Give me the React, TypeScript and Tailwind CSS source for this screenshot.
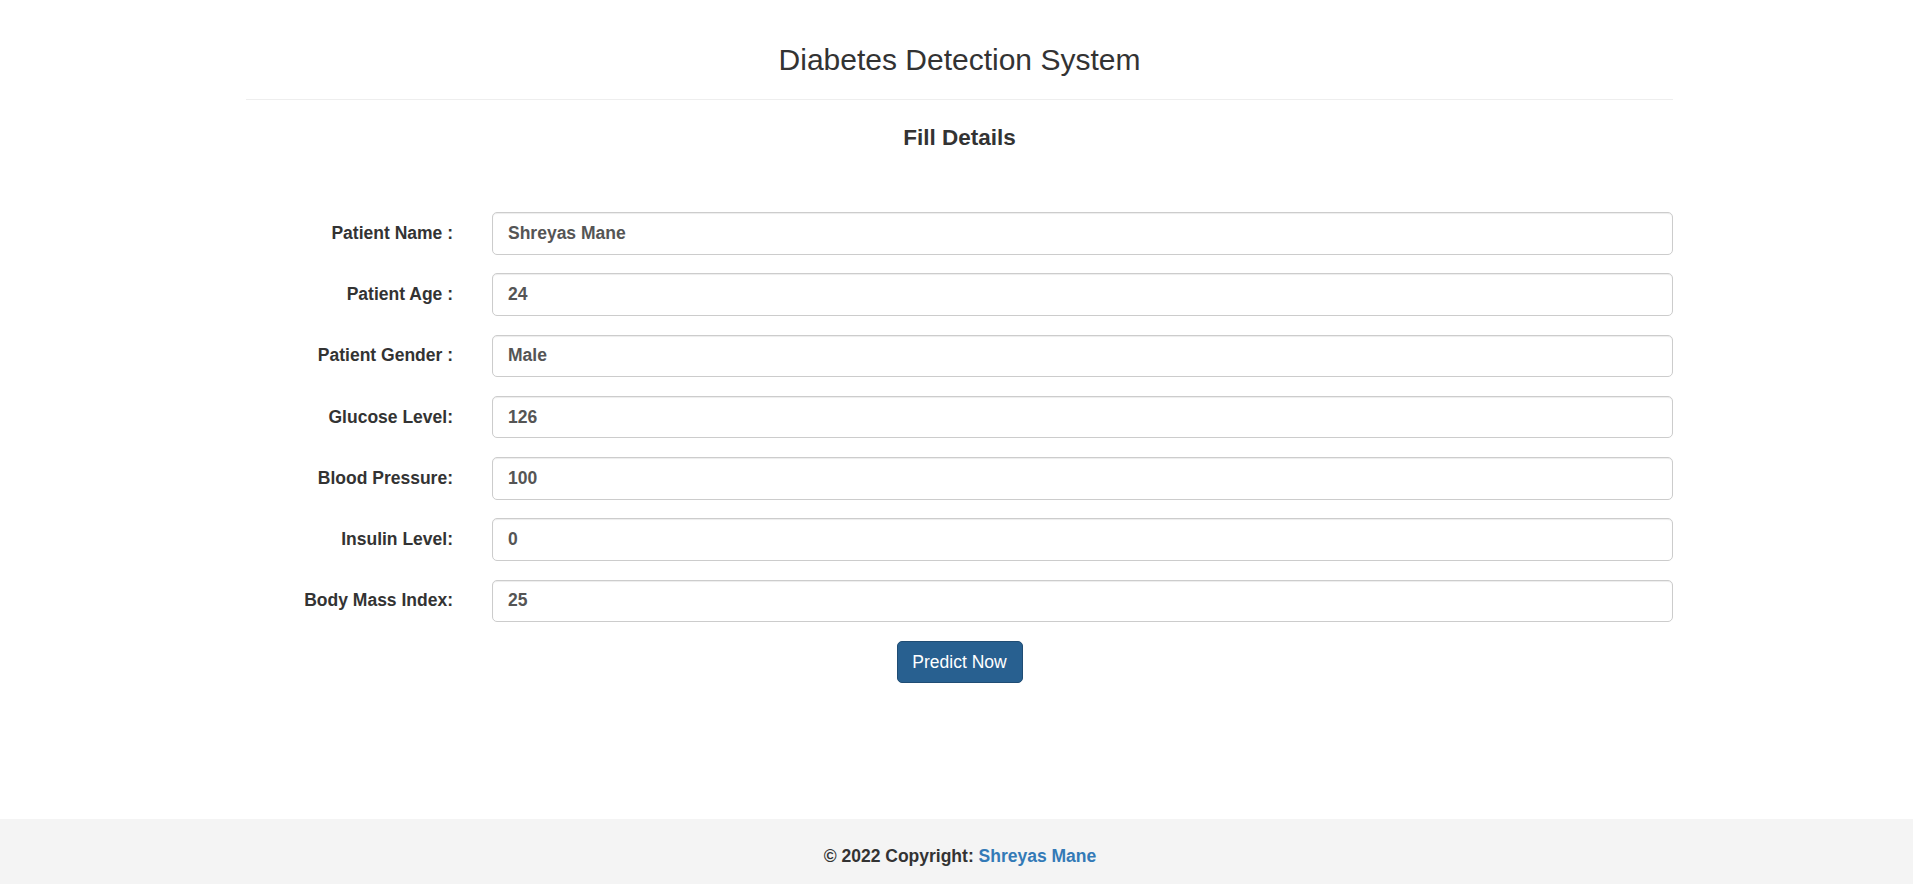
const fields = [
  { label: 'Patient Name :', value: 'Shreyas Mane' },
  { label: 'Patient Age :', value: '24' },
  { label: 'Patient Gender :', value: 'Male' },
  { label: 'Glucose Level:', value: '126' },
  { label: 'Blood Pressure:', value: '100' },
  { label: 'Insulin Level:', value: '0' },
  { label: 'Body Mass Index:', value: '25' },
];

export default function App() {
  return (
    <div className="min-h-screen bg-white font-['Liberation_Sans',Arial,sans-serif] text-[#333]">
      <div className="ml-[246px] w-[1427px]">
        <h2 className="pt-[43px] text-center text-[30px] leading-[33px] font-normal">
          Diabetes Detection System
        </h2>
        <hr className="mt-[23px] border-t border-[#eeeeee]" />
        <h4 className="mt-[25px] text-center text-[22.5px] leading-[25px] font-bold">Fill Details</h4>

        {/* Form */}
        <form className="mt-[62px] flex flex-col gap-[18.75px]" onSubmit={(e) => e.preventDefault()}>
          {fields.map((f) => (
            <div key={f.label} className="flex items-center">
              <label className="w-[207px] text-right text-[17.5px] font-bold leading-[25px]">{f.label}</label>
              <input
                type="text"
                defaultValue={f.value}
                className="ml-[39px] h-[42.5px] flex-1 rounded-[5px] border border-[#cccccc] bg-white px-[15px] text-[17.5px] font-bold text-[#555555] shadow-[inset_0_1px_1px_rgba(0,0,0,0.075)] outline-none"
              />
            </div>
          ))}
          <div className="flex justify-center">
            <button
              type="submit"
              className="h-[42.5px] w-[126px] rounded-[5px] border border-[#204d74] bg-[#286090] text-[17.5px] text-white"
            >
              Predict Now
            </button>
          </div>
        </form>
      </div>

      <footer className="mt-[136px] flex h-[74px] items-center justify-center bg-[#f4f4f4] pl-[7px] text-[17.5px] font-bold">
        <span>
          © 2022 Copyright: <a href="#" className="text-[#337ab7]">Shreyas Mane</a>
        </span>
      </footer>
    </div>
  );
}
